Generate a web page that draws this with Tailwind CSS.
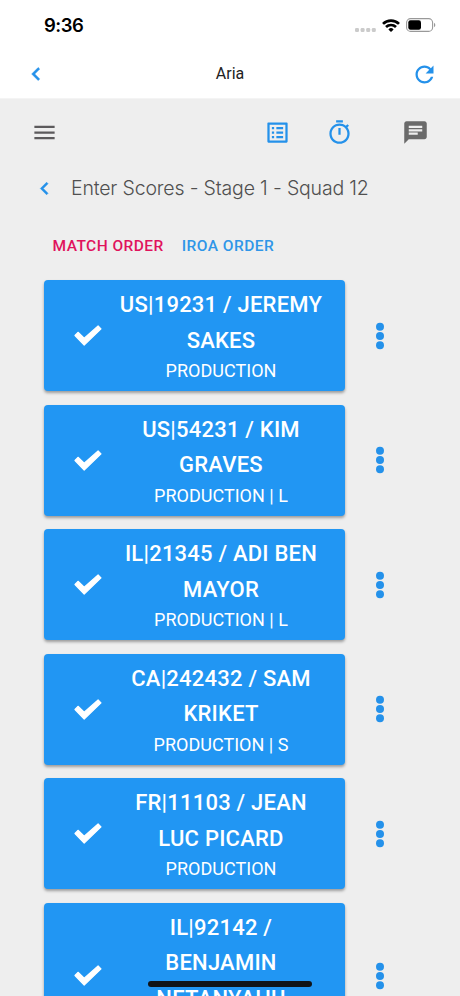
<!DOCTYPE html>
<html lang="en">
<head>
    <meta charset="UTF-8">
    <meta name="viewport" content="width=device-width, initial-scale=1.0">
    <title>Aria</title>
    <script src="https://cdn.jsdelivr.net/npm/@tailwindcss/browser@4"></script>
</head>
<body class="h-[996px] overflow-hidden bg-[#eeeeee] font-[Roboto,sans-serif]">

    <!-- Status bar -->
    <div class="flex h-[50px] items-center justify-between bg-white pl-[44px] pr-[24px] pt-[1px]">
        <span class="font-[Inter,sans-serif] text-[18.5px] font-semibold tracking-[-0.5px] text-black">9:36</span>
        <div class="flex items-center">
            <svg class="mr-[6px] mt-[9px] h-[4px] w-[21px]" viewBox="0 0 21 4" fill="#cbcbcb">
                <rect x="0" width="4" height="4" rx="1.3"/><rect x="5.6" width="4" height="4" rx="1.3"/><rect x="11.2" width="4" height="4" rx="1.3"/><rect x="16.8" width="4" height="4" rx="1.3"/>
            </svg>
            <svg class="mr-[6px] h-[13px] w-[18px]" viewBox="0 0 18 13" fill="none" stroke="#000" stroke-width="2.7">
                <path d="M1 4.9a11.4 11.4 0 0 1 16 0"/>
                <path d="M4 8a7.2 7.2 0 0 1 10 0"/>
                <path d="M6.4 10.4a3.7 3.7 0 0 1 5.2 0L9 13z" fill="#000" stroke="none"/>
            </svg>
            <svg class="-mt-px h-[14px] w-[30px]" viewBox="0 0 30 14">
                <rect x=".6" y=".6" width="26" height="12.8" rx="4" fill="none" stroke="#999" stroke-width="1.1"/>
                <rect x="2.3" y="2.3" width="12.7" height="9.4" rx="2.2" fill="#000"/>
                <path d="M28 4.8c1.8.7 1.8 3.7 0 4.4z" fill="#999"/>
            </svg>
        </div>
    </div>

    <!-- App header -->
    <header class="flex h-[49px] items-center justify-between border-b border-[#f4f4f4] bg-white pl-[23px] pr-[22px]">
        <svg class="h-[26px] w-[26px]" viewBox="0 0 24 24" fill="#2491ea"><path d="M15.41 7.41L14 6l-6 6 6 6 1.41-1.41L10.83 12z" stroke="#2491ea" stroke-width=".5"/></svg>
        <h1 class="text-[16px] leading-[24px] text-[#222]">Aria</h1>
        <svg class="h-[27px] w-[27px]" viewBox="0 0 24 24" fill="#2491ea"><path d="M17.65 6.35C16.2 4.9 14.21 4 12 4c-4.42 0-7.99 3.58-7.99 8s3.57 8 7.99 8c3.73 0 6.84-2.55 7.73-6h-2.08c-.82 2.33-3.04 4-5.65 4-3.31 0-6-2.69-6-6s2.69-6 6-6c1.66 0 3.14.69 4.22 1.78L13 11h7V4l-2.35 2.35z"/></svg>
    </header>

    <!-- Toolbar -->
    <nav class="flex h-[66px] items-center pl-[31px] pr-[31px]">
        <svg class="h-[27px] w-[27px]" viewBox="0 0 24 24" fill="#5c5a5c"><path d="M3 18h18v-2H3v2zm0-5h18v-2H3v2zm0-7v2h18V6H3z"/></svg>
        <svg class="ml-auto h-[27px] w-[27px]" viewBox="0 0 24 24" fill="#2491ea"><path d="M19 5v14H5V5h14m1.100-2H3.900c-.5 0-.9.400-.9.900v16.200c0 .4.400.9.900.9h16.200c.4 0 .9-.5.900-.9V3.900c0-.5-.5-.9-.9-.9zM11 7h6v2h-6V7zm0 4h6v2h-6v-2zm0 4h6v2h-6zM7 7h2v2H7zm0 4h2v2H7zm0 4h2v2H7z"/></svg>
        <svg class="ml-[35px] h-[27px] w-[27px]" viewBox="0 0 24 24" fill="#2491ea"><path d="M15 1H9v2h6V1zm-4 13h2V8h-2v6zm8.030-6.610l1.420-1.420c-.43-.51-.9-.99-1.410-1.410l-1.420 1.420C16.070 4.740 14.120 4 12 4c-4.970 0-9 4.030-9 9s4.020 9 9 9 9-4.030 9-9c0-2.120-.74-4.070-1.970-5.610zM12 20c-3.870 0-7-3.130-7-7s3.130-7 7-7 7 3.130 7 7-3.130 7-7 7z"/></svg>
        <svg class="ml-[49px] h-[27px] w-[27px]" viewBox="0 0 24 24" fill="#6a6a6a"><path d="M20 2H4c-1.100 0-1.990.9-1.990 2L2 22l4-4h14c1.100 0 2-.9 2-2V4c0-1.100-.9-2-2-2zM6 9h12v2H6V9zm8 5H6v-2h8v2zm4-6H6V6h12v2z"/></svg>
    </nav>

    <!-- Page title -->
    <div class="flex h-[47px] items-center pl-[32px]">
        <svg class="h-[25px] w-[25px]" viewBox="0 0 24 24" fill="#2491ea"><path d="M15.41 7.41L14 6l-6 6 6 6 1.41-1.41L10.83 12z" stroke="#2491ea" stroke-width=".5"/></svg>
        <h2 class="ml-[14px] whitespace-nowrap font-[Inter,sans-serif] text-[19.5px] font-light tracking-[-0.17px] text-[#505050]">Enter Scores - Stage 1 - Squad 12</h2>
    </div>

    <!-- Order tabs -->
    <div class="flex h-[68px] items-center gap-[18px] whitespace-nowrap pl-[52.5px] pt-[1px] text-[15.5px] font-medium tracking-[0.45px]">
        <span class="text-[#e0135c]">MATCH ORDER</span>
        <span class="text-[#2f96e8]">IROA ORDER</span>
    </div>

    <!-- Competitors -->
    <main id="list" class="flex flex-col gap-[13.5px] pl-[44px]"></main>

    <!-- Home indicator -->
    <div class="absolute left-[148px] top-[981px] h-[5.5px] w-[164px] rounded-full bg-[#101418]"></div>

    <script>
        // Names are split by line, the way they wrap inside a card
        const competitors = [
            { name: ['US|19231 / JEREMY', 'SAKES'], division: 'PRODUCTION' },
            { name: ['US|54231 / KIM', 'GRAVES'], division: 'PRODUCTION | L' },
            { name: ['IL|21345 / ADI BEN', 'MAYOR'], division: 'PRODUCTION | L' },
            { name: ['CA|242432 / SAM', 'KRIKET'], division: 'PRODUCTION | S' },
            { name: ['FR|11103 / JEAN', 'LUC PICARD'], division: 'PRODUCTION' },
            { name: ['IL|92142 /', 'BENJAMIN', 'NETANYAHU'], division: 'PRODUCTION' },
        ];

        document.getElementById('list').innerHTML = competitors.map(c => `
            <div class="flex items-center">
                <div class="flex w-[301px] items-center rounded-[4px] bg-[#2196f3] py-[7px] pl-[30px] text-white shadow-[0_2px_3px_rgba(0,0,0,0.35)]">
                    <svg class="h-[21px] w-[28px] shrink-0" viewBox="0 0 28 21" fill="#fff" stroke="#fff" stroke-width="1.2" stroke-linejoin="round">
                        <path d="M1 10.5L4 7.3L10.2 13.300L24.100 1L27 3.900L10.200 20z"/>
                    </svg>
                    <div class="ml-[12px] w-[214px] text-center">
                        <p class="whitespace-nowrap text-[22px] font-medium leading-[35.5px] tracking-[0.22px]">${c.name.join('<br>')}</p>
                        <p class="text-[18px] leading-[26px] tracking-[0.02px]">${c.division}</p>
                    </div>
                </div>
                <svg class="ml-[31px] h-[28px] w-[8px]" viewBox="0 0 8 28" fill="#2491ea">
                    <circle cx="4" cy="4.700" r="4"/><circle cx="4" cy="14" r="4"/><circle cx="4" cy="23.300" r="4"/>
                </svg>
            </div>`).join('');
    </script>

</body>
</html>
